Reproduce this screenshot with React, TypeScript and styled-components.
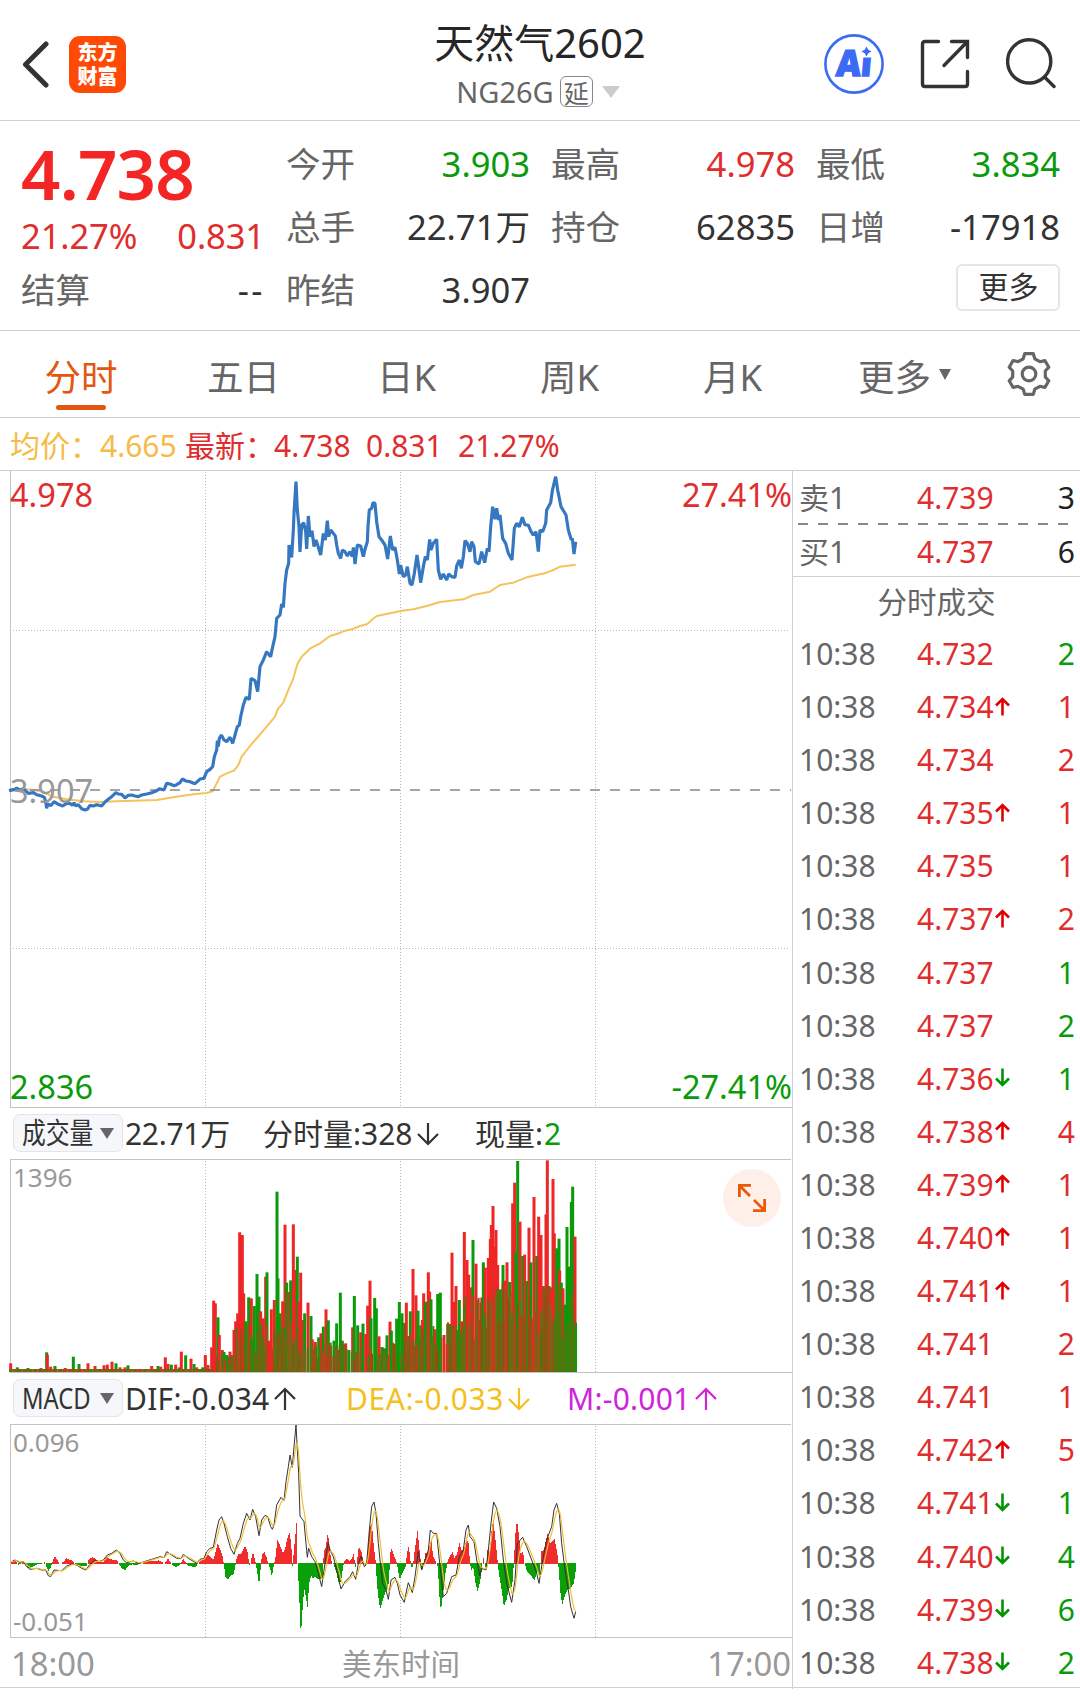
import React from "react";
import styled, { createGlobalStyle } from "styled-components";

const RED = "#e02d2d";
const GREEN = "#0a9a0a";
const ORANGE = "#e2580f";
const DARK = "#333";
const GRAY = "#666";
const LIGHT = "#999";
const LINE = "#d0d0d0";

const GlobalStyle = createGlobalStyle`
  * { box-sizing: border-box; }
  body {
    margin: 0;
    background: #fff;
    font-family: "Noto Sans", "Noto Sans CJK SC", sans-serif;
    color: ${DARK};
  }
`;

const Page = styled.div`
  width: 1080px;
  height: 1700px;
  display: flex;
  flex-direction: column;
  background: #fff;
  overflow: hidden;
`;

/* ---------- header ---------- */

const Header = styled.header`
  height: 121px;
  border-bottom: 1px solid ${LINE};
  display: grid;
  grid-template-columns: 400px 1fr 400px;
  align-items: center;
`;

const HeaderLeft = styled.div`
  display: flex;
  align-items: center;
  gap: 20px;
  padding: 9px 0 0 22px;
`;

const Logo = styled.div`
  width: 57px;
  height: 57px;
  border-radius: 11px;
  background: #ff4a05;
  color: #fff;
  font: 900 20px/24px "Noto Sans CJK SC", sans-serif;
  display: flex;
  flex-direction: column;
  align-items: center;
  justify-content: center;
  padding-bottom: 2px;
`;

const HeaderCenter = styled.div`
  display: flex;
  flex-direction: column;
  align-items: center;
  padding-top: 11px;
`;

const Title = styled.h1`
  margin: 0;
  font-size: 40px;
  font-weight: 400;
  line-height: 50px;
  height: 52px;
  color: #262626;
  white-space: nowrap;
`;

const Subtitle = styled.div`
  display: flex;
  align-items: center;
  height: 44px;
  font-size: 29px;
  line-height: 40px;
  color: ${GRAY};
  margin-left: -4px;
`;

const DelayBadge = styled.span`
  width: 33px;
  height: 31px;
  margin: 0 9px 0 6px;
  border: 1.5px solid #888;
  border-radius: 6px;
  display: flex;
  align-items: center;
  justify-content: center;
  font: 400 25px/28px "Noto Sans CJK SC", sans-serif;
`;

const HeaderRight = styled.div`
  display: flex;
  align-items: center;
  justify-content: flex-end;
  gap: 36px;
  padding: 8px 24px 0 0;
`;

/* ---------- quote summary ---------- */

const Quote = styled.section`
  height: 210px;
  border-bottom: 1px solid ${LINE};
  padding: 11px 20px 0 21px;
  display: grid;
  grid-template-columns: repeat(4, 244px);
  grid-template-rows: repeat(3, 63px);
  column-gap: 21px;
`;

const PriceBlock = styled.div`
  grid-row: span 2;
  display: flex;
  flex-direction: column;
`;

const BigPrice = styled.div`
  height: 84px;
  padding-top: 5px;
  font-size: 69px;
  line-height: 72px;
  font-weight: 600;
  letter-spacing: -0.8px;
  color: #f42525;
`;

const PriceChange = styled.div`
  display: flex;
  justify-content: space-between;
  height: 40px;
  line-height: 40px;
  font-size: 34.5px;
  letter-spacing: -0.1px;
  color: ${RED};
`;

const Field = styled.div`
  display: flex;
  justify-content: space-between;
  align-items: center;
  height: 63px;
  font-size: 34.6px;
  line-height: 50px;
`;

const FieldLabel = styled.span`
  color: ${GRAY};
`;

const FieldValue = styled.span<{ $color?: string; $spread?: boolean }>`
  color: ${(p) => p.$color || DARK};
  letter-spacing: ${(p) => (p.$spread ? "2.5px" : "0")};
`;

const MoreCell = styled.div`
  grid-column: 4;
  display: flex;
  justify-content: flex-end;
  align-items: center;
  height: 59px;
`;

const MoreButton = styled.button`
  width: 104px;
  height: 47px;
  padding: 0 0 1px 1px;
  border: 2px solid #e6e6e6;
  border-radius: 6px;
  background: #fff;
  font-family: inherit;
  font-size: 30px;
  line-height: 40px;
  color: ${DARK};
`;

/* ---------- tabs ---------- */

const Tabs = styled.nav`
  height: 87px;
  border-bottom: 1px solid ${LINE};
  display: grid;
  grid-template-columns: 162px repeat(4, 163px) 183px 83px;
`;

const Tab = styled.div<{ $active?: boolean }>`
  display: flex;
  flex-direction: column;
  align-items: center;
  padding-top: 18px;
  font-size: 36.5px;
  line-height: 56px;
  color: ${(p) => (p.$active ? ORANGE : GRAY)};
`;

const TabLabel = styled.span`
  height: 56px;
`;

const TabLine = styled.span`
  width: 50px;
  height: 5px;
  border-radius: 3px;
  background: ${ORANGE};
`;

const MoreTab = styled(Tab)`
  flex-direction: row;
  align-items: flex-start;
  justify-content: flex-start;
  gap: 8px;
  padding-left: 44px;
`;

const Caret = styled.span<{ $w: number; $h: number; $color?: string; $top?: number }>`
  width: 0;
  height: 0;
  margin-top: ${(p) => p.$top || 0}px;
  border-left: ${(p) => p.$w / 2}px solid transparent;
  border-right: ${(p) => p.$w / 2}px solid transparent;
  border-top: ${(p) => p.$h}px solid ${(p) => p.$color || GRAY};
`;

const GearCell = styled.div`
  display: flex;
  padding: 20px 0 0 10px;
`;

/* ---------- average row ---------- */

const AvgRow = styled.div`
  height: 53px;
  border-bottom: 1px solid ${LINE};
  display: flex;
  align-items: center;
  padding: 3px 0 0 10px;
  font-size: 30px;
  line-height: 44px;
  color: ${RED};
`;

const AvgItem = styled.span<{ $w: number; $color?: string }>`
  width: ${(p) => p.$w}px;
  color: ${(p) => p.$color || RED};
  white-space: nowrap;
`;

/* ---------- body ---------- */

const Body = styled.main`
  display: grid;
  grid-template-columns: 792px 288px;
  height: 1217px;
  border-bottom: 1px solid ${LINE};
`;

const Charts = styled.div`
  display: flex;
  flex-direction: column;
`;

const Chart = styled.div<{ $h: number }>`
  position: relative;
  height: ${(p) => p.$h}px;
  margin-left: 10px;
  border-left: 1px solid #c4c4c4;
  border-bottom: 1px solid #c4c4c4;
`;

const Drawing = styled.svg`
  display: block;
  margin-left: -1px;
  overflow: visible;
`;

const CornerLabel = styled.span<{
  $top: number;
  $right?: boolean;
  $color: string;
  $size: number;
}>`
  position: absolute;
  top: ${(p) => p.$top}px;
  ${(p) => (p.$right ? "right: 0;" : `left: ${p.$size > 30 ? -1 : 2}px;`)}
  font-size: ${(p) => p.$size}px;
  line-height: 40px;
  color: ${(p) => p.$color};
`;

const IndicatorBar = styled.div`
  height: 52px;
  display: flex;
  align-items: center;
  padding: 0 0 0 13px;
  font-size: 30px;
  line-height: 44px;
  margin-right: 1px;
  position: relative;
  &::after {
    content: "";
    position: absolute;
    left: 10px;
    right: 0;
    bottom: 0;
    border-bottom: 1px solid #c4c4c4;
  }
`;

const IndicatorPicker = styled.div`
  width: 110px;
  height: 38px;
  margin: 0 2px 2px 0;
  padding: 0 8px 0 8px;
  border: 1px solid #e3e5e8;
  border-radius: 7px;
  background: #f6f7fa;
  display: flex;
  align-items: center;
  justify-content: space-between;
`;

const PickerText = styled.span`
  width: 74px;
  font-size: 29px;
  line-height: 36px;
  transform: scaleX(0.82);
  transform-origin: left center;
  white-space: nowrap;
`;

const Metric = styled.span<{ $w: number; $color?: string; $spacing?: number }>`
  width: ${(p) => p.$w}px;
  color: ${(p) => p.$color || DARK};
  letter-spacing: ${(p) => p.$spacing || 0}px;
  display: flex;
  align-items: center;
  gap: 4px;
  white-space: nowrap;
`;

const GreenText = styled.span`
  color: ${GREEN};
  margin-left: -3px;
`;

const ExpandButton = styled.div`
  position: absolute;
  right: 11px;
  top: 9px;
  width: 58px;
  height: 58px;
  border-radius: 50%;
  background: #fef0e9;
  display: flex;
  align-items: center;
  justify-content: center;
`;

const TimeAxis = styled.div`
  height: 49px;
  display: flex;
  justify-content: space-between;
  align-items: center;
  padding: 2px 1px 0 11px;
  font-size: 32.8px;
  line-height: 46px;
  color: ${LIGHT};
`;

const AxisTitle = styled.span`
  font-size: 29.5px;
`;

/* ---------- order book and trades ---------- */

const Side = styled.aside`
  border-left: 1px solid ${LINE};
  display: flex;
  flex-direction: column;
`;

const Book = styled.div`
  height: 106px;
  border-bottom: 1px solid ${LINE};
`;

const DashLine = styled.div`
  height: 2px;
  margin: 0 12px 0 5px;
  background: repeating-linear-gradient(90deg, #888 0 10px, transparent 10px 20px);
`;

const Row = styled.div<{ $h: number; $top?: number }>`
  height: ${(p) => p.$h}px;
  display: grid;
  grid-template-columns: 118px 100px 1fr;
  align-items: center;
  padding: ${(p) => p.$top || 0}px 5px 0 6px;
  font-size: 30px;
  line-height: 42px;
  color: ${RED};
`;

const RowLabel = styled.span`
  color: ${GRAY};
`;

const RowPrice = styled.span`
  display: flex;
  align-items: center;
  gap: 1px;
`;

const RowQty = styled.span<{ $color: string }>`
  text-align: right;
  color: ${(p) => p.$color};
`;

const TradesTitle = styled.div`
  height: 50.4px;
  display: flex;
  align-items: center;
  justify-content: center;
  font-size: 29.5px;
  line-height: 44px;
  color: ${GRAY};
`;

/* ---------- icons ---------- */

const BackIcon = () => (
  <svg width="27" height="48" viewBox="0 0 27 48" fill="none">
    <path d="M24 3 L3.500 23.500 L24 44" stroke="#333" strokeWidth="5" strokeLinecap="round" strokeLinejoin="round" />
  </svg>
);

const AiIcon = () => (
  <svg width="60" height="62" viewBox="0 0 60 62" fill="none">
    <ellipse cx="30" cy="31" rx="28.6" ry="28.6" stroke="#3b6bf5" strokeWidth="2.6" />
    <g transform="translate(11.500 43) skewX(-5)">
      <text
        fontFamily="Noto Sans"
        fontWeight="900"
        fontSize="36"
        fill="#3b6bf5"
        stroke="#3b6bf5"
        strokeWidth="1.4"
        textLength="35.500"
        lengthAdjust="spacingAndGlyphs"
      >
        Ai
      </text>
    </g>
    <rect x="36" y="11" width="13" height="13.500" fill="#fff" />
    <path d="M42.500 13.500 L44.300 16.700 L47.500 18.500 L44.300 20.300 L42.500 23.500 L40.700 20.300 L37.500 18.500 L40.700 16.700 Z" fill="#3b6bf5" />
  </svg>
);

const ShareIcon = () => (
  <svg width="50" height="50" viewBox="0 0 50 50" fill="none" stroke="#333" strokeWidth="3.4" strokeLinecap="round" strokeLinejoin="round">
    <path d="M18.500 2.500 H5 Q2.500 2.500 2.500 5 V45 Q2.500 47.500 5 47.500 H45 Q47.500 47.500 47.500 45 V32.500" />
    <path d="M31.500 2.500 H47.500 V18.500" strokeLinejoin="miter" />
    <path d="M47 3 L24 26.500" />
  </svg>
);

const SearchIcon = () => (
  <svg width="50" height="52" viewBox="0 0 50 52" fill="none" stroke="#333" strokeWidth="3.4" strokeLinecap="round">
    <circle cx="23.200" cy="23.400" r="21.600" />
    <path d="M39 39.500 L48 48.500" />
  </svg>
);

const GearIcon = () => (
  <svg width="44" height="46" viewBox="-22 -23 44 46" fill="none" stroke="#666" strokeWidth="3.2" strokeLinejoin="round">
    <path d="M-4.300 -20.300 H4.300 L5.800 -15.200 L11 -12.300 L15.900 -13.500 L19.800 -6.800 L16.300 -3 V3 L19.800 6.800 L15.900 13.500 L11 12.300 L5.800 15.200 L4.300 20.300 H-4.300 L-5.800 15.200 L-11 12.300 L-15.900 13.500 L-19.800 6.800 L-16.300 3 V-3 L-19.800 -6.800 L-15.900 -13.500 L-11 -12.300 L-5.800 -15.200 Z" />
    <circle r="6.800" />
  </svg>
);

const ExpandIcon = () => (
  <svg width="30" height="30" viewBox="0 0 30 30" fill="none" stroke="#e8590c" strokeWidth="2.800">
    <path d="M14 2.400 H2.400 V14 M2.400 2.400 L13 13" />
    <path d="M16 27.600 H27.600 V16 M27.600 27.600 L17 17" />
  </svg>
);

const LongArrow = ({ up }: { up?: boolean }) => (
  <svg width="22" height="24" viewBox="0 0 22 24" fill="none" stroke="currentColor" strokeWidth="2.200">
    <path d={up ? "M11 23 V2 M1 12 L11 2 L21 12" : "M11 1 V22 M1 12 L11 22 L21 12"} />
  </svg>
);

const TickArrow = ({ up }: { up?: boolean }) => (
  <svg width="15" height="21" viewBox="0 0 15 21" fill="none" stroke={up ? "#e00000" : "#009500"} strokeWidth="2.600">
    <path d={up ? "M7.500 18.500 V2 M1 8.500 L7.500 2 L14 8.500" : "M7.500 0.500 V17 M1 10.500 L7.500 17 L14 10.500"} />
  </svg>
);

/* ---------- chart data (three units per pixel) ---------- */

type Point = [number, number];

const parse = (text: string, dx = 0): Point[] =>
  text
    .trim()
    .split(/\s+/)
    .map((pair) => {
      const [x, y] = pair.split(",").map(Number);
      return [x + dx, y] as Point;
    });

const toLine = (points: Point[]) => points.map((p) => p.join(",")).join(" ");

const PRICE = [
  ...parse(`27,992 45,988 50,984 60,990 70,986 85,1000 100,998 110,1004 125,1008 133,1012 137,1025 140,1045 143,1032
  152,1037 162,1025 175,1033 188,1038 200,1030 210,1030 217,1036 222,1029 228,1038 235,1034 245,1046 255,1050 262,1048
  270,1036 280,1038 290,1034 305,1038 315,1026 325,1018 335,1010 348,998 355,1002 365,1003 375,1014 385,1006 395,1005
  405,1008 415,1010 425,1005 440,1002 455,998 470,992 478,986 492,990 500,970 510,972 522,977 530,974 540,968 547,957
  558,963 570,965 585,971 595,962 600,957 612,955 620,935 630,928 638,920 643,890 650,870 652,842 655,860 658,835 664,825
  672,840 680,845 690,832 698,850 705,825 712,800 718,795 722,770 730,735 738,712 748,718 753,655 765,662 773,695 780,620
  790,600 800,575 812,590 817,565 825,530 830,475 840,465 845,432 850,442 855,370 860,330 866,310 867,255 875,292 880,210
  882,160 888,65 892,150 897,200 900,276 905,195 911,188 917,215 920,267 925,168 930,230 936,212 942,260 948,240 955,262
  962,285 970,220 976,240`),
  ...parse(
    `142,182 146,230 152,210 160,220 166,228 170,255 175,280 182,295 187,270 195,275 202,288 210,275 217,290 220,262
  225,312 232,255 242,258 250,290 255,268 262,245 264,200 268,150 275,145 279,128 285,130 290,185 297,230 305,240 315,255
  323,297 331,228 338,270 345,262 352,300 358,342 362,315 370,350 377,345 382,320 390,370 396,375 403,340 411,285 416,320
  422,368 430,320 436,290 442,300 449,238 453,270 460,250 470,238 475,330 482,358 490,342 500,360 506,342 515,350 525,352
  530,318 538,300 544,325 550,290 555,242 562,250 570,275 575,245 582,260 586,305 597,312 605,275 614,308 622,265 627,275
  632,200 638,140 645,178 650,145 656,180 660,165 668,235 677,250 685,280 696,300 703,205 710,190 718,200 727,172 735,195
  745,195 753,215 760,225 768,215 775,275 780,210 788,215 797,190 800,150 812,128 817,92 827,50 833,90 843,140 858,165
  865,210 874,240 877,235 882,282 887,245`,
    840
  ),
];

const AVERAGE = [
  ...parse(`30,988 80,988 120,993 160,1010 200,1018 250,1024 300,1026 350,1024 400,1022 470,1020 520,1012 580,1003
  620,999 638,994 650,970 660,950 680,940 702,932 715,915 725,890 750,858 800,800 825,770 833,748 850,728 863,695 880,655
  892,612 905,590 930,566 960,550`),
  ...parse(
    `150,528 170,522 190,514 215,508 240,498 262,492 275,480 290,468 330,460 362,453 400,448 440,438 480,426 550,418
  580,405 630,395 660,375 700,368 740,352 800,338 820,330 840,320 887,314`,
    840
  ),
];

type Bar = { x: number; top: number; color: string };

const parseBars = (text: string, dx = 0): Bar[] =>
  text
    .trim()
    .split(/\s+/)
    .map((item) => {
      const [x, top, c] = item.split(",");
      return { x: Number(x) + dx, top: Number(top), color: c === "g" ? "#0a9a0a" : "#ee2626" };
    });

const VOLUME = [
  ...parseBars(`32,790,r 52,802,g 84,804,g 123,804,r 140,757,g 142,764,r 152,800,r 165,798,g 196,804,r 220,770,g 237,792,g
  264,790,r 285,798,r 312,796,r 322,794,r 336,785,r 348,790,g 360,802,r 375,802,r 384,796,g 455,798,r 474,798,g 482,800,r
  496,772,r 504,792,r 514,794,g 527,794,r 538,802,r 544,755,r 557,766,g 573,776,r 582,792,g 590,802,r 608,802,g 616,765,r
  624,795,r 635,742,r 641,602,r 646,610,r 654,652,g 658,705,r 667,750,r 672,756,g 680,765,g 690,755,r 697,765,g 702,690,r
  707,664,r 713,640,r 719,397,r 727,405,r 731,580,r 738,664,g 746,592,g 754,595,r 763,618,g 771,522,g 777,590,g 782,634,r
  790,655,r 797,530,r 801,517,g 808,722,r 814,628,r 823,600,r 831,275,g 834,535,g 841,640,g 848,604,r 855,374,r 860,548,g
  866,576,r 872,541,g 880,373,r 886,510,r 892,470,g 896,605,r 902,518,r 908,660,r 914,640,g 924,608,r 933,648,g 937,718,r
  946,726,r 956,712,g 963,700,r 970,680,g 978,628,r 985,661,g 992,738,r 1002,722,g 1010,670,g 1021,578,g 1027,722,g
  1037,730,r 1047,750,g 1058,682,r 1063,588,g 1073,676,g 1082,697,r 1089,671,g 1097,702,r 1103,617,r 1110,542,r 1113,655,g
  1124,594,g 1129,625,g 1137,709,r 1148,742,g 1155,745,g 1161,706,g 1170,665,r 1174,692,g 1182,732,g 1190,656,g`),
  ...parseBars(
    `58,606,g 66,640,g 73,672,g 79,608,r 85,708,r 91,634,g 99,507,r 108,586,r 114,632,g 122,676,g 127,660,r 131,580,r 137,605,g
  145,517,r 149,575,r 153,598,g 160,710,r 166,688,r 173,582,g 181,578,g 192,705,r 203,672,g 209,672,g 216,458,r 222,606,r
  228,558,r 233,690,g 238,600,g 245,664,r 253,396,r 261,480,r 266,524,r 273,562,r 279,420,g 288,491,r 292,630,r 298,660,r
  303,608,g 310,487,g 316,503,r 325,474,r 331,417,r 334,375,r 339,318,r 344,440,r 348,390,r 353,495,r 361,568,g 369,495,g
  376,542,r 381,487,r 389,546,g 398,310,r 404,248,r 408,455,g 413,183,g 420,365,r 428,468,g 434,464,r 441,543,g 447,383,r
  453,487,g 462,291,r 470,468,g 476,350,r 483,405,r 490,558,r 498,343,r 502,181,r 507,558,g 512,562,r 519,237,r 523,400,r
  530,445,g 537,416,g 539,512,r 544,548,g 549,565,r 555,614,g 561,381,g 568,500,g 574,306,g 578,260,g 585,410,r`,
    1140
  ),
];

const random = (seed: number) => {
  const v = Math.sin(seed * 12.9898) * 43758.5453;
  return v - Math.floor(v);
};

const baseVolume = () => {
  const bars: Bar[] = [];
  const tones = ["#a04714", "#84601a", "#4c790c", "#c43a1c", "#6b6a12"];
  for (let x = 30, i = 1; x < 1728; x += x < 700 ? 5 : 4, i++) {
    let peak = 9;
    if (x > 640) peak = 55;
    if (x > 700) peak = 150;
    if (x > 930) peak = 90;
    if (x > 1190) peak = 150;
    if (x > 1380) peak = 235;
    if (x > 1460) peak = 270;
    const h = x < 640 ? 9 : peak * (0.35 + 0.65 * random(i));
    const pick = Math.floor(random(i + 500) * tones.length);
    const skip = x > 640 && random(i + 900) < (x > 1380 ? 0.22 : 0.42);
    if (!skip) bars.push({ x, top: 816 - h, color: x > 1660 ? tones[2] : tones[pick] });
  }
  bars.push({ x: 1728, top: 668, color: "#0a9a0a" });
  return bars;
};

const MACD_BARS = [
  ...parse(`30,579 40,570 48,577 55,585 62,579 68,573 75,582 85,596 100,588 110,583 120,583 128,579 134,574 138,590 143,603
  152,590 157,572 163,558 170,570 178,579 190,576 197,564 205,568 217,573 225,584 240,588 258,588 264,570 275,561 285,566
  292,572 300,576 308,577 318,560 330,568 350,570 356,585 365,595 374,602 382,588 395,583 405,586 415,583 430,576 450,573
  465,574 475,571 485,577 492,580 503,565 510,577 517,585 525,592 540,583 548,566 556,578 563,587 585,592 592,580 600,572
  612,568 617,555 625,556 632,565 640,568 646,540 652,520 660,540 667,560 670,582 675,620 683,628 692,615 700,612 705,585
  709,560 715,552 722,550 733,528 740,540 746,580 748,588 757,546 765,575 770,605 776,645 780,600 784,555 791,545 798,560
  803,580 810,600 814,620 820,585 825,560 831,510 840,530 848,550 855,530 860,505 867,488 872,520 876,588 880,545 888,458
  891,578 895,650 901,800 906,720 911,655 916,680 921,712 926,640 932,618 938,625 944,620 950,628 960,628 966,625 970,545
  976,530 982,487 988,540 993,574 1000,585 1008,610 1016,645 1022,630 1028,590 1032,572 1040,565 1047,572 1055,565 1059,552
  1065,590 1070,570 1075,530 1083,545 1090,580 1096,588 1102,540 1108,470 1114,460 1120,530 1125,570 1130,650 1136,700`),
  ...parse(
    `0,715 10,680 25,640 29,560 31,530 40,555 48,575 58,630 65,610 75,590 80,545 85,528 92,590 97,590 102,545 111,482
  118,550 124,605 130,585 134,550 142,545 148,525 152,505 158,560 165,572 172,590 177,680 181,722 188,670 195,610 202,570
  210,555 216,546 222,565 230,550 237,518 244,545 252,530 258,510 265,520 268,575 272,602 278,590 285,640 291,664 298,640
  304,600 308,560 314,590 318,590 321,540 328,550 332,490 338,446 344,500 350,560 355,610 362,650 370,708 378,690 385,655
  395,650 400,580 402,540 406,470 410,455 416,500 420,550 428,545 432,580 440,605 450,615 462,630 470,605 478,618 482,545
  490,540 496,510 502,490 508,520 515,515 522,508 530,545 534,590 540,670 545,705 552,680 560,660 570,655 580,640 586,600`,
    1140
  ),
];

const DIF = [
  ...parse(`35,575 45,570 60,577 70,575 80,590 90,598 110,595 125,600 137,600 145,617 152,620 162,600 185,602 200,588 215,582
  230,585 245,595 258,600 268,585 285,570 295,575 310,570 322,555 335,550 349,540 360,550 370,570 380,578 400,573 415,580
  430,576 455,568 480,560 492,563 500,545 515,555 530,565 543,566 550,553 565,565 590,580 600,568 612,565 620,545 630,535
  640,532 650,480 657,450 665,440 672,460 682,500 692,535 702,553 712,520 720,505 730,460 740,430 750,450 758,418 767,440
  777,497 785,450 795,436 803,440 812,470 817,478 822,465 830,405 843,382 852,392 858,335 865,290 870,255 877,292 882,230
  888,165 892,240 896,310 900,438 912,455 917,510 922,562 926,535 935,560 945,575 955,610 965,650 972,600 980,545 985,518
  990,540 1000,560 1010,600 1023,657 1035,635 1050,620 1058,605 1067,628 1075,580 1083,558 1093,590 1100,580 1108,480
  1115,410 1122,396 1128,430 1135,520`),
  ...parse(
    `0,570 8,640 18,660 25,688 33,630 45,622 52,640 60,675 73,697 80,660 85,638 97,668 105,620 115,545 125,600 135,570
  145,540 151,480 160,490 170,490 178,570 190,680 200,670 215,620 228,615 238,560 250,540 258,480 265,465 270,500 282,515
  290,570 300,618 305,595 318,600 325,540 333,460 341,396 350,415 360,470 370,570 380,640 395,697 405,630 412,520 428,502
  440,530 455,570 470,610 477,640 488,570 500,510 515,470 522,420 530,400 538,430 545,520 555,600 565,660 572,710 582,745
  587,725`,
    1140
  ),
];

const sample = (points: Point[], step: number): Point[] => {
  const out: Point[] = [];
  let i = 0;
  for (let x = points[0][0]; x <= points[points.length - 1][0]; x += step) {
    while (i < points.length - 2 && points[i + 1][0] < x) i++;
    const [x0, y0] = points[i];
    const [x1, y1] = points[i + 1];
    out.push([x, y0 + ((y1 - y0) * (x - x0)) / (x1 - x0)]);
  }
  return out;
};

const smooth = (points: Point[], alpha: number): Point[] => {
  let prev = points[0][1];
  return points.map(([x, y]) => {
    prev = prev + alpha * (y - prev);
    return [x, Number(prev.toFixed(1))];
  });
};

const DEA = smooth(sample(DIF, 2), 0.23);

const Verticals = ({ y1, y2 }: { y1: number; y2: number }) => (
  <g stroke="#bbb" strokeWidth="3" strokeDasharray="3 6" shapeRendering="crispEdges">
    {[616.5, 1201.5, 1786.5].map((x) => (
      <line key={x} x1={x} x2={x} y1={y1} y2={y2} />
    ))}
  </g>
);

const PriceDrawing = () => (
  <Drawing width="782" height="636" viewBox="30 33 2346 1908">
    <Verticals y1={36} y2={1938} />
    <g stroke="#bbb" strokeWidth="3" strokeDasharray="3 6" shapeRendering="crispEdges">
      <line x1={39} x2={2370} y1={511.5} y2={511.5} />
      <line x1={39} x2={2370} y1={1465.5} y2={1465.5} />
    </g>
    <polyline points={toLine(AVERAGE)} fill="none" stroke="#f5c35c" strokeWidth="6" strokeLinejoin="round" />
    <line x1={30} x2={2373} y1={990} y2={990} stroke="#888" strokeWidth="5" strokeDasharray="30 30" />
    <polyline points={toLine(PRICE)} fill="none" stroke="#3577c0" strokeWidth="9.5" strokeLinejoin="bevel" />
  </Drawing>
);

const VolumeDrawing = () => (
  <Drawing width="782" height="212" viewBox="30 180 2346 636">
    <Verticals y1={183} y2={816} />
    {VOLUME.map((b, i) => (
      <rect key={i} x={b.x - 4.5} y={b.top} width={9} height={816 - b.top} fill={b.color} />
    ))}
    {baseVolume().map((b, i) => (
      <rect key={i} x={b.x - 3} y={b.top} width={6} height={816 - b.top} fill={b.color} />
    ))}
  </Drawing>
);

const MacdDrawing = () => (
  <Drawing width="782" height="212" viewBox="30 165 2346 636">
    <Verticals y1={168} y2={801} />
    <g shapeRendering="crispEdges">
      {sample(MACD_BARS, 3).map(([x, y], i) => (
        <rect
          key={i}
          x={x}
          y={Math.min(y, 577.5)}
          width={3}
          height={Math.abs(y - 579) + 1.5}
          fill={y < 579 ? "#f02c2c" : "#0aa00a"}
        />
      ))}
    </g>
    <polyline points={toLine(DIF)} fill="none" stroke="#333" strokeWidth="3" strokeLinejoin="round" />
    <polyline points={toLine(DEA)} fill="none" stroke="#eebc2e" strokeWidth="3.4" strokeLinejoin="round" />
  </Drawing>
);

/* ---------- page data ---------- */

const TRADES: [string, string, string, string][] = [
  ["4.732", "", "2", "g"],
  ["4.734", "u", "1", "r"],
  ["4.734", "", "2", "r"],
  ["4.735", "u", "1", "r"],
  ["4.735", "", "1", "r"],
  ["4.737", "u", "2", "r"],
  ["4.737", "", "1", "g"],
  ["4.737", "", "2", "g"],
  ["4.736", "d", "1", "g"],
  ["4.738", "u", "4", "r"],
  ["4.739", "u", "1", "r"],
  ["4.740", "u", "1", "r"],
  ["4.741", "u", "1", "r"],
  ["4.741", "", "2", "r"],
  ["4.741", "", "1", "r"],
  ["4.742", "u", "5", "r"],
  ["4.741", "d", "1", "g"],
  ["4.740", "d", "4", "g"],
  ["4.739", "d", "6", "g"],
  ["4.738", "d", "2", "g"],
];

const QuoteField = ({ label, value, color }: { label: string; value: string; color?: string }) => (
  <Field>
    <FieldLabel>{label}</FieldLabel>
    <FieldValue $color={color} $spread={value === "--"}>
      {value}
    </FieldValue>
  </Field>
);

export default function App() {
  return (
    <Page>
      <GlobalStyle />
      <Header>
        <HeaderLeft>
          <BackIcon />
          <Logo>
            <span>东方</span>
            <span>财富</span>
          </Logo>
        </HeaderLeft>
        <HeaderCenter>
          <Title>天然气2602</Title>
          <Subtitle>
            NG26G<DelayBadge>延</DelayBadge>
            <Caret $w={19} $h={12} $color="#ccc" />
          </Subtitle>
        </HeaderCenter>
        <HeaderRight>
          <AiIcon />
          <ShareIcon />
          <SearchIcon />
        </HeaderRight>
      </Header>

      <Quote>
        <PriceBlock>
          <BigPrice>4.738</BigPrice>
          <PriceChange>
            <span>21.27%</span>
            <span>0.831</span>
          </PriceChange>
        </PriceBlock>
        <QuoteField label="今开" value="3.903" color={GREEN} />
        <QuoteField label="最高" value="4.978" color={RED} />
        <QuoteField label="最低" value="3.834" color={GREEN} />
        <QuoteField label="总手" value="22.71万" />
        <QuoteField label="持仓" value="62835" />
        <QuoteField label="日增" value="-17918" />
        <QuoteField label="结算" value="--" />
        <QuoteField label="昨结" value="3.907" />
        <MoreCell>
          <MoreButton>更多</MoreButton>
        </MoreCell>
      </Quote>

      <Tabs>
        <Tab $active>
          <TabLabel>分时</TabLabel>
          <TabLine />
        </Tab>
        {["五日", "日K", "周K", "月K"].map((t) => (
          <Tab key={t}>
            <TabLabel>{t}</TabLabel>
          </Tab>
        ))}
        <MoreTab>
          <TabLabel>更多</TabLabel>
          <Caret $w={13} $h={11} $top={20} />
        </MoreTab>
        <GearCell>
          <GearIcon />
        </GearCell>
      </Tabs>

      <AvgRow>
        <AvgItem $w={90} $color="#f5bb45">均价：</AvgItem>
        <AvgItem $w={85} $color="#f5bb45">4.665</AvgItem>
        <AvgItem $w={89}>最新：</AvgItem>
        <AvgItem $w={92}>4.738</AvgItem>
        <AvgItem $w={92}>0.831</AvgItem>
        <AvgItem $w={110}>21.27%</AvgItem>
      </AvgRow>

      <Body>
        <Charts>
          <Chart $h={637}>
            <CornerLabel $top={4} $color={RED} $size={32.5}>4.978</CornerLabel>
            <CornerLabel $top={4} $color={RED} $size={32.5} $right>27.41%</CornerLabel>
            <CornerLabel $top={300} $color={LIGHT} $size={32.5}>3.907</CornerLabel>
            <CornerLabel $top={596} $color={GREEN} $size={32.5}>2.836</CornerLabel>
            <CornerLabel $top={596} $color={GREEN} $size={32.5} $right>-27.41%</CornerLabel>
            <PriceDrawing />
          </Chart>

          <IndicatorBar>
            <IndicatorPicker>
              <PickerText>成交量</PickerText>
              <Caret $w={14} $h={11} />
            </IndicatorPicker>
            <Metric $w={138} $spacing={-0.3}>22.71万</Metric>
            <Metric $w={212}>
              分时量:328
              <LongArrow />
            </Metric>
            <Metric $w={100}>
              现量:<GreenText>2</GreenText>
            </Metric>
          </IndicatorBar>
          <Chart $h={213}>
            <CornerLabel $top={-3} $color={LIGHT} $size={26}>1396</CornerLabel>
            <VolumeDrawing />
            <ExpandButton>
              <ExpandIcon />
            </ExpandButton>
          </Chart>

          <IndicatorBar>
            <IndicatorPicker>
              <PickerText>MACD</PickerText>
              <Caret $w={14} $h={11} />
            </IndicatorPicker>
            <Metric $w={221} $spacing={0.25}>
              DIF:-0.034
              <LongArrow up />
            </Metric>
            <Metric $w={221} $color="#f3c01c" $spacing={0.6}>
              DEA:-0.033
              <LongArrow />
            </Metric>
            <Metric $w={160} $color="#d024d8" $spacing={0.25}>
              M:-0.001
              <LongArrow up />
            </Metric>
          </IndicatorBar>
          <Chart $h={213}>
            <CornerLabel $top={-3} $color={LIGHT} $size={26}>0.096</CornerLabel>
            <CornerLabel $top={176} $color={LIGHT} $size={26}>-0.051</CornerLabel>
            <MacdDrawing />
          </Chart>

          <TimeAxis>
            <span>18:00</span>
            <AxisTitle>美东时间</AxisTitle>
            <span>17:00</span>
          </TimeAxis>
        </Charts>

        <Side>
          <Book>
            <Row $h={52} $top={2}>
              <RowLabel>卖1</RowLabel>
              <RowPrice>4.739</RowPrice>
              <RowQty $color="#222">3</RowQty>
            </Row>
            <DashLine />
            <Row $h={53}>
              <RowLabel>买1</RowLabel>
              <RowPrice>4.737</RowPrice>
              <RowQty $color="#222">6</RowQty>
            </Row>
          </Book>
          <TradesTitle>分时成交</TradesTitle>
          {TRADES.map(([price, dir, qty, c], i) => (
            <Row key={i} $h={53.1}>
              <RowLabel>10:38</RowLabel>
              <RowPrice>
                {price}
                {dir && <TickArrow up={dir === "u"} />}
              </RowPrice>
              <RowQty $color={c === "g" ? GREEN : RED}>{qty}</RowQty>
            </Row>
          ))}
        </Side>
      </Body>
    </Page>
  );
}
